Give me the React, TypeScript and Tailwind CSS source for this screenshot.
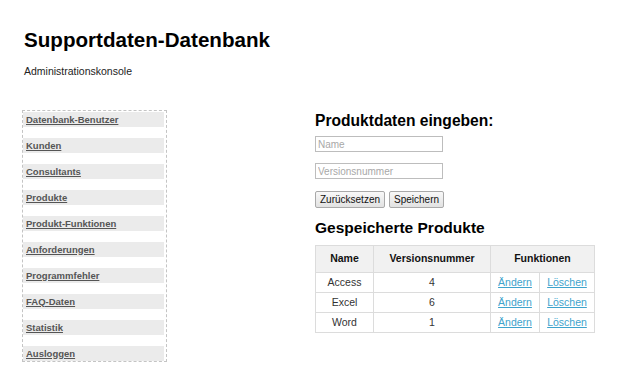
import React from 'react'

const navItems = [
    'Datenbank-Benutzer',
    'Kunden',
    'Consultants',
    'Produkte',
    'Produkt-Funktionen',
    'Anforderungen',
    'Programmfehler',
    'FAQ-Daten',
    'Statistik',
    'Ausloggen',
]

const products = [
    { name: 'Access', version: 4 },
    { name: 'Excel', version: 6 },
    { name: 'Word', version: 1 },
]

export default function App() {
    return (
        <div className="w-[640px] h-[378px] overflow-hidden bg-white text-[#222] font-['Liberation_Sans',Arial,sans-serif]">
            {/* Header */}
            <header className="pl-6 pt-[28px]">
                <h1 className="text-[20.6px] leading-6 font-bold text-black">Supportdaten-Datenbank</h1>
                <p className="mt-[13px] text-[10.5px] leading-[13px]">Administrationskonsole</p>
            </header>

            <div className="flex items-start pl-[22px] mt-[32px]">
                {/* Sidebar */}
                <nav className="w-[145px] border border-dashed border-[#c4c4c4] pt-px">
                    <ul className="flex flex-col gap-[11px]">
                        {navItems.map(item => (
                            <li key={item} className="h-[15px] mr-[2px] bg-[#ebebeb] pl-[3px] flex items-center">
                                <a href="#" className="text-[9.5px] leading-[12px] font-bold text-[#555] underline">{item}</a>
                            </li>
                        ))}
                    </ul>
                </nav>

                {/* Main content */}
                <main className="ml-[148px] w-[280px]">
                    <h2 className="text-[15.6px] leading-[18px] font-bold text-black mt-[2px]">Produktdaten eingeben:</h2>
                    <div className="mt-[6px] flex flex-col gap-[11px]">
                        <input placeholder="Name" className="w-[128px] h-[16px] border border-[#bdbdbd] px-[2px] text-[10px] placeholder:text-[#a8a8a8] outline-none" />
                        <input placeholder="Versionsnummer" className="w-[128px] h-[16px] border border-[#bdbdbd] px-[2px] text-[10px] placeholder:text-[#a8a8a8] outline-none" />
                    </div>
                    <div className="mt-[12px] flex gap-[4px]">
                        <button className="h-[17px] px-[4px] text-[10px] leading-[12px] text-[#111] border border-[#a9a9a9] rounded-[2px] bg-gradient-to-b from-[#f8f8f8] to-[#e2e2e2]">Zurücksetzen</button>
                        <button className="h-[17px] px-[4px] text-[10px] leading-[12px] text-[#111] border border-[#a9a9a9] rounded-[2px] bg-gradient-to-b from-[#f8f8f8] to-[#e2e2e2]">Speichern</button>
                    </div>

                    <h2 className="mt-[11px] text-[15.5px] leading-[18px] font-bold text-black">Gespeicherte Produkte</h2>
                    <table className="mt-[8px] w-[280px] border-collapse text-[10.5px] text-center">
                        <thead>
                            <tr className="h-[27px] bg-[#f1f1f1]">
                                <th className="w-[58px] border border-[#dcdcdc] font-bold text-[#111]">Name</th>
                                <th className="w-[117px] border border-[#dcdcdc] font-bold text-[#111]">Versionsnummer</th>
                                <th colSpan={2} className="border border-[#dcdcdc] font-bold text-[#111]">Funktionen</th>
                            </tr>
                        </thead>
                        <tbody>
                            {products.map(p => (
                                <tr key={p.name} className="h-[20px]">
                                    <td className="border border-[#dcdcdc] text-[#333]">{p.name}</td>
                                    <td className="border border-[#dcdcdc] text-[#333]">{p.version}</td>
                                    <td className="w-[49px] border border-[#dcdcdc]">
                                        <a href="#" className="text-[#3ea3cc] underline">Ändern</a>
                                    </td>
                                    <td className="border border-[#dcdcdc]">
                                        <a href="#" className="text-[#3ea3cc] underline">Löschen</a>
                                    </td>
                                </tr>
                            ))}
                        </tbody>
                    </table>
                </main>
            </div>
        </div>
    )
}
